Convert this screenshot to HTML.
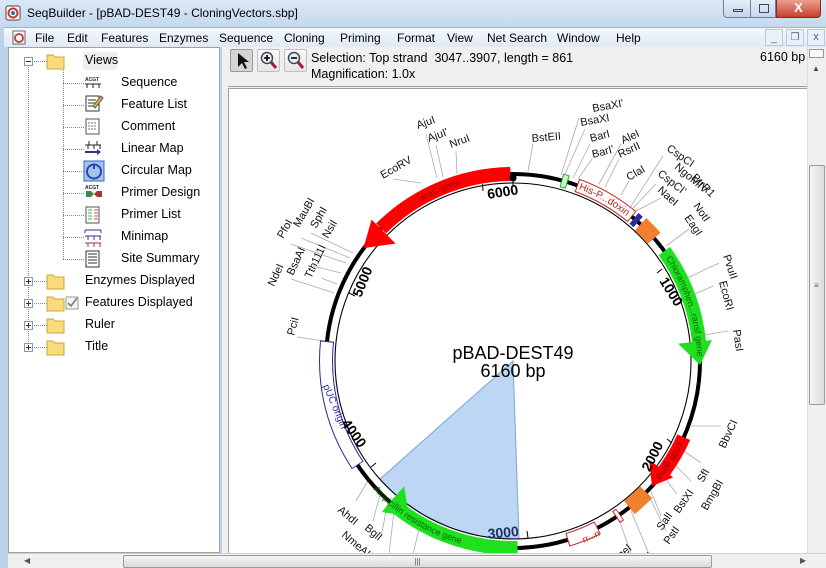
<!DOCTYPE html>
<html><head><meta charset="utf-8">
<style>
*{margin:0;padding:0;box-sizing:border-box}
html,body{width:826px;height:568px;overflow:hidden}
body{background:#bcd3ea;font-family:"Liberation Sans",sans-serif;font-size:12px;color:#000;position:relative}
.abs{position:absolute}
#title{left:0;top:0;width:826px;height:27px;background:linear-gradient(#dbe8f6,#c4d8ee)}
#menu{left:4px;top:27px;width:822px;height:20px;background:linear-gradient(#f4f8fc,#dfe9f5);border-top:1px solid #9fb6d0}
#menu span{position:absolute;top:3px}
#tree{left:8px;top:47px;width:212px;height:506px;background:#fff;border:1px solid #a0a0a0}
#tree .t{position:absolute;font-size:12.5px}
#right{left:222px;top:47px;width:604px;height:506px;background:#f0f0f0}
#canvas{left:228px;top:88px;width:579px;height:465px;background:#fff;border-top:1px solid #a0a0a0;border-left:1px solid #a0a0a0;overflow:hidden}
#vs{left:807px;top:47px;width:19px;height:506px;background:#f0f0f0;border-left:1px solid #ddd}
#hs{left:8px;top:553px;width:818px;height:15px;background:#f0f0f0;border-top:1px solid #d0d0d0}
.btn{position:absolute;width:23px;height:23px;border:1px solid #c0c0c0;border-radius:2px;background:linear-gradient(#fbfbfb,#e6e6e6)}
</style></head><body>

<div id="title" class="abs">
  <svg class="abs" style="left:5px;top:5px" width="16" height="16"><rect x="1" y="1" width="14" height="14" rx="2" fill="#fff" stroke="#444"/><circle cx="8" cy="8" r="4.5" fill="none" stroke="#c33" stroke-width="2"/><circle cx="8" cy="8" r="2" fill="#36a"/></svg>
  <span class="abs" style="left:27px;top:6px;font-size:12px">SeqBuilder - [pBAD-DEST49 - CloningVectors.sbp]</span>
  <div class="abs" style="left:723px;top:0;width:28px;height:18px;border:1px solid #6d82a0;border-top:none;border-radius:0 0 0 4px;background:linear-gradient(#e5eef8,#c6d6ea)"><div class="abs" style="left:9px;top:9px;width:10px;height:3px;border:1px solid #445"></div></div>
  <div class="abs" style="left:750px;top:0;width:26px;height:18px;border:1px solid #6d82a0;border-top:none;background:linear-gradient(#e5eef8,#c6d6ea)"><div class="abs" style="left:8px;top:4px;width:10px;height:9px;border:1px solid #445"></div></div>
  <div class="abs" style="left:776px;top:0;width:45px;height:18px;border:1px solid #7a3020;border-top:none;border-radius:0 0 4px 0;background:linear-gradient(#e8a090,#c8402a);color:#fff;font-weight:bold;text-align:center;font-size:13px;line-height:16px">X</div>
</div>

<div id="menu" class="abs">
  <svg class="abs" style="left:8px;top:2px" width="15" height="15"><rect x="1" y="1" width="12" height="13" fill="#fff" stroke="#666"/><circle cx="7" cy="8" r="4" fill="none" stroke="#c33" stroke-width="1.8"/></svg>
  <span style="left:31px">File</span><span style="left:63px">Edit</span><span style="left:97px">Features</span><span style="left:155px">Enzymes</span><span style="left:215px">Sequence</span><span style="left:280px">Cloning</span><span style="left:336px">Priming</span><span style="left:393px">Format</span><span style="left:443px">View</span><span style="left:483px">Net Search</span><span style="left:553px">Window</span><span style="left:612px">Help</span>
  <div class="abs" style="left:761px;top:1px;width:18px;height:17px;border:1px solid #b9c9dc;background:#eaf0f7;color:#557;font-size:10px;text-align:center;line-height:18px">_</div>
  <div class="abs" style="left:782px;top:1px;width:18px;height:17px;border:1px solid #b9c9dc;background:#eaf0f7;color:#557;font-size:10px;text-align:center;line-height:15px">&#x2750;</div>
  <div class="abs" style="left:803px;top:1px;width:18px;height:17px;border:1px solid #b9c9dc;background:#eaf0f7;color:#557;font-size:11px;text-align:center;line-height:15px">x</div>
</div>

<div id="tree" class="abs">
<svg class="abs" style="left:0;top:0" width="212" height="320">
  <g stroke="#888" stroke-dasharray="1,1" fill="none">
    <line x1="19.5" y1="13" x2="19.5" y2="299"/>
    <line x1="19" y1="13.5" x2="38" y2="13.5"/>
    <line x1="54.5" y1="20" x2="54.5" y2="211"/>
    <line x1="54" y1="35.5" x2="76" y2="35.5"/><line x1="54" y1="57.5" x2="76" y2="57.5"/><line x1="54" y1="79.5" x2="76" y2="79.5"/><line x1="54" y1="101.5" x2="76" y2="101.5"/><line x1="54" y1="123.5" x2="76" y2="123.5"/><line x1="54" y1="145.5" x2="76" y2="145.5"/><line x1="54" y1="167.5" x2="76" y2="167.5"/><line x1="54" y1="189.5" x2="76" y2="189.5"/><line x1="54" y1="211.5" x2="76" y2="211.5"/>
    <line x1="19" y1="233.5" x2="38" y2="233.5"/><line x1="19" y1="255.5" x2="38" y2="255.5"/><line x1="19" y1="277.5" x2="38" y2="277.5"/><line x1="19" y1="299.5" x2="38" y2="299.5"/>
  </g>
  <g fill="#fff" stroke="#8a9aac">
    <rect x="15.5" y="9.5" width="8" height="8"/><rect x="15.5" y="229.5" width="8" height="8"/><rect x="15.5" y="251.5" width="8" height="8"/><rect x="15.5" y="273.5" width="8" height="8"/><rect x="15.5" y="295.5" width="8" height="8"/>
  </g>
  <g stroke="#333" stroke-width="1"><line x1="17" y1="13.5" x2="22" y2="13.5"/>
   <line x1="17" y1="233.5" x2="22" y2="233.5"/><line x1="19.5" y1="231" x2="19.5" y2="236"/>
   <line x1="17" y1="255.5" x2="22" y2="255.5"/><line x1="19.5" y1="253" x2="19.5" y2="258"/>
   <line x1="17" y1="277.5" x2="22" y2="277.5"/><line x1="19.5" y1="275" x2="19.5" y2="280"/>
   <line x1="17" y1="299.5" x2="22" y2="299.5"/><line x1="19.5" y1="297" x2="19.5" y2="302"/></g>
  <g fill="#f8dc7c" stroke="#c9a640">
    <path d="M38 7h6l2 2h9v12h-17z"/><path d="M38 227h6l2 2h9v12h-17z"/><path d="M38 249h6l2 2h9v12h-17z"/><path d="M38 271h6l2 2h9v12h-17z"/><path d="M38 293h6l2 2h9v12h-17z"/>
  </g>
  <rect x="57" y="249" width="12" height="12" fill="#f4f4f4" stroke="#999"/><path d="M59 255l3 3 6-8" stroke="#777" stroke-width="1.5" fill="none"/>
  <rect x="74" y="4" width="34" height="18" fill="#eee"/>
  <g font-size="5" font-weight="bold" fill="#222">
   <text x="76" y="33">ACGT</text><path d="M76 36h16M78 36v4M84 36v4M90 36v4" stroke="#222"/>
   <rect x="77" y="48" width="13" height="15" fill="#fff" stroke="#333"/><path d="M79 52h8M79 55h8M79 58h8" stroke="#333"/><path d="M84 58l8-10 2 2-8 10z" fill="#e8b040" stroke="#654"/>
   <rect x="77" y="71" width="13" height="15" fill="#fff" stroke="#555"/><path d="M79 75h9M79 78h9M79 81h9" stroke="#777" stroke-dasharray="2,1"/>
   <path d="M76 97h16M80 93v4h8v-4M79 97v4M85 97v4M91 97v4" stroke="#222" fill="none"/><path d="M76 104h13" stroke="#338" stroke-width="2"/><path d="M88 101l4 3-4 3z" fill="#338"/>
   <rect x="75" y="113" width="20" height="20" fill="#a8c4ee" stroke="#3c64b4"/><circle cx="85" cy="123.5" r="7" fill="none" stroke="#1a4cb0" stroke-width="2"/><path d="M85 116v5" stroke="#1a4cb0" stroke-width="2"/>
   <text x="76" y="141">ACGT</text><path d="M77 143h5l3 3-3 3h-5z" fill="#3a8a4a"/><path d="M93 143h-5l-3 3 3 3h5z" fill="#a33"/>
   <rect x="77" y="159" width="13" height="16" fill="#fff" stroke="#555"/><path d="M79 162h4M79 165h4M79 168h4M79 171h4" stroke="#4a4"/><path d="M85 162h4M85 165h4M85 168h4M85 171h4" stroke="#c55"/>
   <path d="M76 182h16M76 182v3M92 182v3M76 188h16M79 188v4M85 188v4M91 188v4" stroke="#338" fill="none"/><path d="M76 195h16M79 195v4M85 195v4M91 195v4" stroke="#a33" fill="none"/>
   <rect x="77" y="203" width="13" height="16" fill="#fff" stroke="#333"/><path d="M79 206h9M79 209h9M79 212h9M79 215h9" stroke="#333"/>
  </g>
</svg>
  <div class="t" style="left:76px;top:5px">Views</div>
  <div class="t" style="left:112px;top:27px">Sequence</div>
  <div class="t" style="left:112px;top:49px">Feature List</div>
  <div class="t" style="left:112px;top:71px">Comment</div>
  <div class="t" style="left:112px;top:93px">Linear Map</div>
  <div class="t" style="left:112px;top:115px">Circular Map</div>
  <div class="t" style="left:112px;top:137px">Primer Design</div>
  <div class="t" style="left:112px;top:159px">Primer List</div>
  <div class="t" style="left:112px;top:181px">Minimap</div>
  <div class="t" style="left:112px;top:203px">Site Summary</div>
  <div class="t" style="left:76px;top:225px">Enzymes Displayed</div>
  <div class="t" style="left:76px;top:247px">Features Displayed</div>
  <div class="t" style="left:76px;top:269px">Ruler</div>
  <div class="t" style="left:76px;top:291px">Title</div>
</div>

<div id="right" class="abs">
  <div class="btn" style="left:8px;top:2px;background:#d4d4d4;border-color:#999"><svg width="21" height="21"><path d="M7 3v14l4-4 3 6 2-1-3-6h5z" fill="#111"/></svg></div>
  <div class="btn" style="left:35px;top:2px"><svg width="21" height="21"><circle cx="9" cy="8" r="5.5" fill="#e8f0fa" stroke="#445" stroke-width="1.5"/><path d="M6 8h6M9 5v6" stroke="#000" stroke-width="1.6"/><path d="M13 12l5 6" stroke="#a02030" stroke-width="3"/></svg></div>
  <div class="btn" style="left:62px;top:2px"><svg width="21" height="21"><circle cx="9" cy="8" r="5.5" fill="#e8f0fa" stroke="#445" stroke-width="1.5"/><path d="M6 8h6" stroke="#000" stroke-width="1.6"/><path d="M13 12l5 6" stroke="#a02030" stroke-width="3"/></svg></div>
  <div class="abs" style="left:89px;top:3px;font-size:12.5px;line-height:16px">Selection: Top strand&nbsp; 3047..3907, length = 861<br>Magnification: 1.0x</div>
  <div class="abs" style="left:538px;top:3px;font-size:12.5px">6160 bp</div>
  <div class="abs" style="left:6px;top:39px;width:579px;height:1px;background:#a0a0a0"></div>
</div>

<div id="canvas" class="abs">
<svg width="579" height="465" viewBox="228 88 579 465" style="position:absolute;left:0;top:0" font-family="Liberation Sans, sans-serif">
  <defs>
    <path id="cw2" d="M512,176 A184,184 0 1,1 511.99,176"/>
    <path id="ccw" d="M356.4,469 A190,190 0 0,0 528.6,549.3"/>
  </defs>
  <polygon points="512,360 518,537.9 481.1,535.3 451.1,527.3 423,514.1 397.6,496.3 378.9,478.2" fill="#bcd6f4" stroke="#7aa6d8" stroke-width="1"/>
  <g stroke="#aaa" stroke-width="0.8">
    <line x1="420" y1="182" x2="392" y2="178"/><line x1="436" y1="177" x2="425" y2="133"/><line x1="442" y1="176" x2="435" y2="144"/><line x1="456" y1="173" x2="455" y2="150"/>
    <line x1="527" y1="170" x2="532" y2="143"/><line x1="560" y1="174" x2="578" y2="117"/><line x1="563" y1="175" x2="584" y2="128"/><line x1="572" y1="177" x2="589" y2="143"/><line x1="577" y1="178" x2="591" y2="158"/>
    <line x1="598" y1="183" x2="620" y2="143"/><line x1="604" y1="186" x2="618" y2="158"/><line x1="620" y1="194" x2="628" y2="180"/><line x1="630" y1="205" x2="662" y2="155"/><line x1="632" y1="207" x2="655" y2="183"/><line x1="635" y1="210" x2="660" y2="197"/><line x1="665" y1="245" x2="688" y2="228"/>
    <line x1="680" y1="280" x2="718" y2="262"/><line x1="687" y1="296" x2="712" y2="285"/><line x1="697" y1="335" x2="727" y2="330"/>
    <line x1="690" y1="425" x2="720" y2="425"/><line x1="680" y1="448" x2="700" y2="462"/><line x1="672" y1="462" x2="690" y2="480"/><line x1="662" y1="475" x2="676" y2="493"/><line x1="650" y1="490" x2="660" y2="515"/><line x1="647" y1="493" x2="665" y2="530"/><line x1="630" y1="510" x2="648" y2="553"/><line x1="618" y1="518" x2="630" y2="553"/>
    <line x1="352" y1="252" x2="310" y2="232"/><line x1="349" y1="257" x2="300" y2="237"/><line x1="345" y1="262" x2="290" y2="243"/><line x1="340" y1="272" x2="312" y2="265"/><line x1="336" y1="283" x2="320" y2="277"/><line x1="333" y1="292" x2="290" y2="278"/><line x1="323" y1="340" x2="296" y2="336"/>
    <line x1="368" y1="478" x2="355" y2="500"/><line x1="380" y1="490" x2="372" y2="520"/><line x1="388" y1="497" x2="380" y2="535"/><line x1="394" y1="502" x2="388" y2="553"/><line x1="420" y1="520" x2="412" y2="553"/>
  </g>
  <circle cx="512" cy="360" r="187" fill="none" stroke="#000" stroke-width="4"/>
  <circle cx="512" cy="360" r="178" fill="none" stroke="#000" stroke-width="1.1"/>
  <g transform="rotate(-90 512 360)" fill="none">
    <circle cx="512" cy="360" r="187" stroke="#f00" stroke-width="14" stroke-dasharray="143.6 2000" stroke-dashoffset="-1028.1"/>
    <circle cx="512" cy="360" r="187" stroke="#1ee01e" stroke-width="14" stroke-dasharray="97.9 2000" stroke-dashoffset="-176.2"/>
    <circle cx="512" cy="360" r="187" stroke="#f00" stroke-width="14" stroke-dasharray="39.2 2000" stroke-dashoffset="-372.1"/>
    <circle cx="512" cy="360" r="187" stroke="#1ee01e" stroke-width="14" stroke-dasharray="138.7 2000" stroke-dashoffset="-582.6"/>
    <circle cx="512" cy="360" r="187" stroke="#f08030" stroke-width="17" stroke-dasharray="19.6 2000" stroke-dashoffset="-140.3"/>
    <circle cx="512" cy="360" r="187" stroke="#f08030" stroke-width="17" stroke-dasharray="22.8 2000" stroke-dashoffset="-439"/>
    <circle cx="512" cy="360" r="187" stroke="#c02020" stroke-width="14" stroke-dasharray="63.6 2000" stroke-dashoffset="-65.3"/>
    <circle cx="512" cy="360" r="187" stroke="#fff" stroke-width="12" stroke-dasharray="61.7 2000" stroke-dashoffset="-66.3"/>
    <circle cx="512" cy="360" r="187" stroke="#2a2aa0" stroke-width="14" stroke-dasharray="130.6 2000" stroke-dashoffset="-770.3"/>
    <circle cx="512" cy="360" r="187" stroke="#fff" stroke-width="12" stroke-dasharray="128.6 2000" stroke-dashoffset="-771.2"/>
    <circle cx="512" cy="360" r="187" stroke="#c02020" stroke-width="14" stroke-dasharray="32.6 2000" stroke-dashoffset="-499.4"/>
    <circle cx="512" cy="360" r="187" stroke="#fff" stroke-width="12" stroke-dasharray="30.7 2000" stroke-dashoffset="-500.3"/>
    <circle cx="512" cy="360" r="187" stroke="#30b030" stroke-width="14" stroke-dasharray="6.5 2000" stroke-dashoffset="-49"/>
    <circle cx="512" cy="360" r="187" stroke="#c8f8c8" stroke-width="12" stroke-dasharray="4.5 2000" stroke-dashoffset="-50"/>
    <circle cx="512" cy="360" r="187" stroke="#2a2aa0" stroke-width="14" stroke-dasharray="5.5 2000" stroke-dashoffset="-131.5"/>
    <circle cx="512" cy="360" r="187" stroke="#c02020" stroke-width="14" stroke-dasharray="4.9 2000" stroke-dashoffset="-473.3"/>
    <circle cx="512" cy="360" r="187" stroke="#fff" stroke-width="12" stroke-dasharray="3 2000" stroke-dashoffset="-474.2"/>
  </g>
  <polygon transform="rotate(315 512 360)" points="512,180 512,160 486,174.4 512,194" fill="#f00"/>
  <polygon transform="rotate(84 512 360)" points="512,180 512,160 535.5,174.4 512,194" fill="#1ee01e"/>
  <polygon transform="rotate(126 512 360)" points="512,180 512,162 531.5,174 512,192" fill="#f00"/>
  <polygon transform="rotate(221 512 360)" points="512,180 512,160 488.5,174.4 512,194" fill="#1ee01e"/>
  <g font-size="9">
    <text fill="#900"><textPath href="#cw2" startOffset="1060">araC gene</textPath></text>
    <text fill="#c02020" font-size="10"><textPath href="#cw2" startOffset="67">His-P...doxin</textPath></text>
    <text fill="#060"><textPath href="#cw2" startOffset="180">Chloramphen...ransf gene</textPath></text>
    <text fill="#800"><textPath href="#cw2" startOffset="372">ccdB gene</textPath></text>
    <text fill="#060"><textPath href="#ccw" startOffset="25">Ampicillin resistance gene</textPath></text>
    <text fill="#c02020" x="583" y="542" transform="rotate(-25 583 542)">rr...n</text>
    <text fill="#2a2aa0" font-size="10" x="322" y="385" transform="rotate(67 322 385)">pUC origin</text>
  </g>
  <g stroke="#000" stroke-width="1">
    <line x1="481.5" y1="183" x2="482" y2="190"/><line x1="661" y1="268" x2="656" y2="272"/><line x1="671" y1="442" x2="666" y2="438"/><line x1="527" y1="537" x2="526" y2="530"/><line x1="370" y1="466" x2="375" y2="462"/><line x1="348" y1="292" x2="354" y2="295"/>
  </g>
  <path d="M512,182 a3,3 0 1,1 0.1,0 M512,182 v6" fill="#000" stroke="#000" transform="translate(0 -2)"/>
  <g font-size="14" font-weight="bold">
    <text x="487" y="198" transform="rotate(-9 487 198)">6000</text>
    <text x="658" y="280" transform="rotate(58 658 280)">1000</text>
    <text x="664" y="441" transform="rotate(-63 664 441) translate(-34 0)">2000</text>
    <text x="487" y="535" fill="#1a3060" transform="rotate(-5 518 535)">3000</text>
    <text x="360" y="450" transform="rotate(54 360 450) translate(-34 0)">4000</text>
    <text x="360" y="297" transform="rotate(-68 360 297)">5000</text>
  </g>
  <text x="512" y="358" font-size="18" text-anchor="middle">pBAD-DEST49</text>
  <text x="512" y="376" font-size="18" text-anchor="middle">6160 bp</text>
  <g font-size="11" fill="#111">
    <text x="417" y="128" transform="rotate(-20 417 128)">AjuI</text>
    <text x="428" y="141" transform="rotate(-20 428 141)">AjuI'</text>
    <text x="450" y="147" transform="rotate(-20 450 147)">NruI</text>
    <text x="382" y="178" transform="rotate(-30 382 178)">EcoRV</text>
    <text x="531" y="141" transform="rotate(-5 531 141)">BstEII</text>
    <text x="592" y="111" transform="rotate(-10 592 111)">BsaXI'</text>
    <text x="580" y="125" transform="rotate(-10 580 125)">BsaXI</text>
    <text x="590" y="141" transform="rotate(-15 590 141)">BarI</text>
    <text x="592" y="157" transform="rotate(-15 592 157)">BarI'</text>
    <text x="622" y="143" transform="rotate(-25 622 143)">AleI</text>
    <text x="619" y="157" transform="rotate(-25 619 157)">RsrII</text>
    <text x="628" y="180" transform="rotate(-30 628 180)">ClaI</text>
    <text x="665" y="149" transform="rotate(35 665 149)">CspCI</text>
    <text x="673" y="167" transform="rotate(40 673 167)">NgoMIV</text>
    <text x="690" y="177" transform="rotate(45 690 177)">BtrR1</text>
    <text x="656" y="174" transform="rotate(38 656 174)">CspCI'</text>
    <text x="656" y="190" transform="rotate(42 656 190)">NaeI</text>
    <text x="692" y="205" transform="rotate(55 692 205)">NotI</text>
    <text x="683" y="217" transform="rotate(55 683 217)">EagI</text>
    <text x="722" y="255" transform="rotate(72 722 255)">PvuII</text>
    <text x="718" y="281" transform="rotate(75 718 281)">EcoRI</text>
    <text x="732" y="329" transform="rotate(82 732 329)">PasI</text>
    <text x="724" y="448" transform="rotate(-65 724 448)">BbvCI</text>
    <text x="702" y="482" transform="rotate(-60 702 482)">SfI</text>
    <text x="706" y="510" transform="rotate(-60 706 510)">BmgBI</text>
    <text x="678" y="513" transform="rotate(-55 678 513)">BstXI</text>
    <text x="661" y="530" transform="rotate(-55 661 530)">SalI</text>
    <text x="668" y="544" transform="rotate(-55 668 544)">PstI</text>
    <text x="620" y="558" transform="rotate(-40 620 558)">nel</text>
    <text x="650" y="558" transform="rotate(-40 650 558)">I</text>
    <text x="282" y="238" transform="rotate(-60 282 238)">PfoI</text>
    <text x="298" y="227" transform="rotate(-60 298 227)">MauBI</text>
    <text x="315" y="228" transform="rotate(-60 315 228)">SphI</text>
    <text x="327" y="238" transform="rotate(-60 327 238)">NsiI</text>
    <text x="292" y="275" transform="rotate(-65 292 275)">BsaAI</text>
    <text x="310" y="278" transform="rotate(-65 310 278)">Tth111I</text>
    <text x="273" y="286" transform="rotate(-65 273 286)">NdeI</text>
    <text x="293" y="335" transform="rotate(-75 293 335)">PciI</text>
    <text x="336" y="510" transform="rotate(40 336 510)">AhdI</text>
    <text x="363" y="528" transform="rotate(40 363 528)">BglI</text>
    <text x="340" y="535" transform="rotate(40 340 535)">NmeAIII</text>
  </g>
</svg>
</div>

<div id="vs" class="abs">
  <div class="abs" style="left:1px;top:2px;width:15px;height:9px;border:1px solid #999;background:#f8f8f8"></div>
  <div class="abs" style="left:4px;top:17px;font-size:8px;color:#444">&#9650;</div>
  <div class="abs" style="left:1px;top:118px;width:16px;height:240px;border:1px solid #9a9a9a;border-radius:2px;background:linear-gradient(90deg,#f4f4f4,#dcdcdc)"><div class="abs" style="left:4px;top:115px;font-size:8px;color:#555">&#8801;</div></div>
</div>
<div id="hs" class="abs">
  <div class="abs" style="left:16px;top:2px;font-size:8px;color:#555">&#9664;</div>
  <div class="abs" style="left:115px;top:1px;width:589px;height:13px;border:1px solid #9a9a9a;border-radius:2px;background:linear-gradient(#f6f6f6,#dadada);text-align:center;font-size:8px;color:#555;line-height:11px">|||</div>
  <div class="abs" style="left:792px;top:2px;font-size:8px;color:#555">&#9654;</div>
</div>
</body></html>
